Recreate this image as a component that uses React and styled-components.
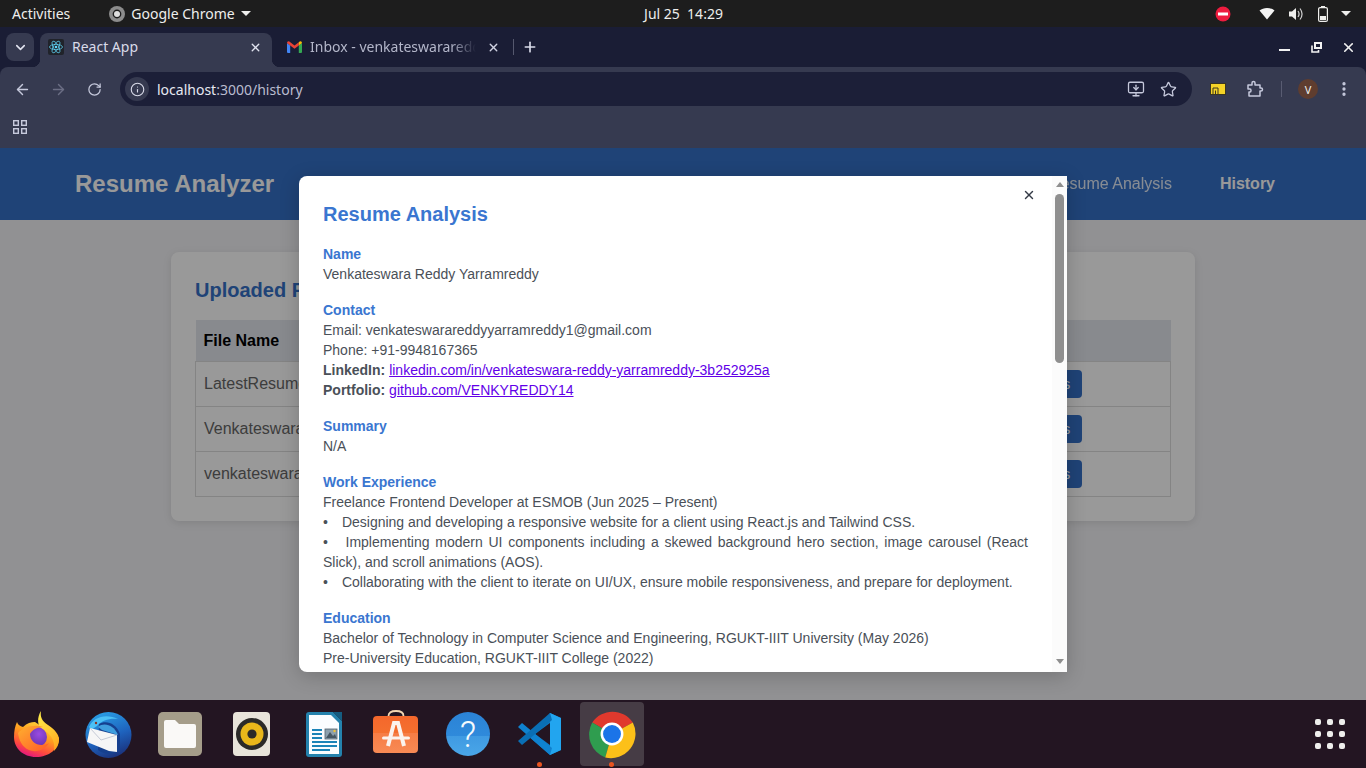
import React from 'react'
import styled, { createGlobalStyle } from 'styled-components'
import { ArrowLeft, ArrowRight, RotateCw, Info, Star, X, Plus, ChevronDown, MonitorDown, EllipsisVertical } from 'lucide-react'

const GlobalStyle = createGlobalStyle`
  html, body { margin: 0; padding: 0; background: #1d1d1d; }
  * { box-sizing: border-box; }
`

const Screen = styled.div`
  width: 1366px;
  height: 768px;
  overflow: hidden;
  display: flex;
  flex-direction: column;
  font-family: "Noto Sans", sans-serif;
`

/* ubuntu top bar */
const TopBar = styled.div`
  height: 27px;
  flex: none;
  background: #1d1d1d;
  color: #eeeeec;
  font-size: 14px;
  display: grid;
  grid-template-columns: 1fr auto 1fr;
  align-items: center;
  padding: 0 15px 0 12px;
`
const TopLeft = styled.div`
  display: flex;
  align-items: center;
`
const AppMenu = styled.div`
  display: flex;
  align-items: center;
  gap: 6px;
  margin-left: 39px;
`
const Clock = styled.div`
  white-space: pre;
  margin-left: 4px;
`
const TopRight = styled.div`
  display: flex;
  align-items: center;
  justify-content: flex-end;
  svg { flex: none; }
`
const Caret = styled.span`
  width: 0;
  height: 0;
  border-left: 5px solid transparent;
  border-right: 5px solid transparent;
  border-top: 5px solid #eeeeec;
`

/* chrome frame */
const Frame = styled.div`
  flex: none;
  background: #1a1d35;
`
const TabStrip = styled.div`
  height: 40px;
  display: flex;
  align-items: flex-end;
  padding-left: 6px;
  color: #d9dbe9;
  font-size: 14px;
`
const TabSearch = styled.div`
  width: 28px;
  height: 28px;
  border-radius: 8px;
  background: #363a50;
  display: flex;
  align-items: center;
  justify-content: center;
  margin-bottom: 6px;
  margin-right: 6px;
`
const ActiveTab = styled.div`
  position: relative;
  width: 232px;
  height: 34px;
  background: #363a50;
  border-radius: 8px 8px 0 0;
  display: flex;
  align-items: center;
  padding: 0 10px 6px 8px;
  gap: 8px;
  &::before, &::after {
    content: '';
    position: absolute;
    bottom: 0;
    width: 8px;
    height: 8px;
  }
  &::before { left: -8px; background: radial-gradient(circle at 0 0, transparent 8px, #363a50 8.5px); }
  &::after { right: -8px; background: radial-gradient(circle at 100% 0, transparent 8px, #363a50 8.5px); }
`
const InactiveTab = styled.div`
  width: 232px;
  height: 34px;
  margin-left: 1px;
  display: flex;
  align-items: center;
  padding: 0 5px 6px 14px;
  gap: 8px;
  color: #b3b6c9;
`
const TabTitle = styled.span`
  flex: 1;
  min-width: 0;
  line-height: 18px;
  white-space: nowrap;
  overflow: hidden;
  margin-right: ${p => p.$fade ? 3 : 0}px;
  mask-image: ${p => p.$fade ? 'linear-gradient(to right, #000 85%, transparent)' : 'none'};
`
const TabDivider = styled.div`
  width: 1px;
  height: 16px;
  background: #55586e;
  margin: 0 8px 12px 8px;
`
const NewTab = styled.div`
  margin-bottom: 12px;
  display: flex;
`
const WindowControls = styled.div`
  margin-left: auto;
  height: 40px;
  display: flex;
  align-items: center;
  padding-right: 2px;
`
const WinButton = styled.div`
  width: 32px;
  height: 24px;
  display: flex;
  align-items: center;
  justify-content: center;
`
const Toolbar = styled.div`
  height: 44px;
  background: #363a50;
  border-radius: 8px 8px 0 0;
  display: flex;
  align-items: center;
  padding: 0 0 0 4px;
`
const NavButton = styled.div`
  flex: none;
  width: 36px;
  height: 36px;
  display: flex;
  align-items: center;
  justify-content: center;
`
const Omnibox = styled.div`
  flex: none;
  width: 1072px;
  height: 34px;
  margin-left: 8px;
  border-radius: 17px;
  background: #1c1f38;
  display: flex;
  align-items: center;
  padding: 0 15px 0 5px;
`
const InfoChip = styled.div`
  width: 24px;
  height: 24px;
  border-radius: 50%;
  background: #363a50;
  display: flex;
  align-items: center;
  justify-content: center;
  margin-right: 8px;
`
const Url = styled.div`
  flex: 1;
  font-size: 14px;
  color: #b9bccf;
  span { color: #e6e8f2; }
`
const OmniIcons = styled.div`
  display: flex;
  align-items: center;
  gap: 15px;
`
const ToolbarRight = styled.div`
  display: flex;
  align-items: center;
  margin-left: 18px;
  flex: none;
`
const Separator = styled.div`
  width: 1px;
  height: 16px;
  background: #595c72;
  margin: 0 16px 0 17px;
`
const Avatar = styled.div`
  width: 20px;
  height: 20px;
  border-radius: 50%;
  background: #5f3d2f;
  color: #eee;
  font-size: 11px;
  display: flex;
  align-items: center;
  justify-content: center;
`
const BookmarkBar = styled.div`
  height: 37px;
  background: #363a50;
  padding: 8px 0 0 12px;
  display: flex;
  align-items: flex-start;
`

/* the page */
const Page = styled.div`
  position: relative;
  height: 552px;
  flex: none;
  background: #f2f2f5;
  font-family: "Liberation Sans", Arial, sans-serif;
`
const Header = styled.header`
  height: 72px;
  background: #3570c6;
  display: flex;
  align-items: center;
  justify-content: space-between;
  padding: 0 91px 0 75px;
  color: #fff;
`
const Brand = styled.div`
  font-size: 24px;
  font-weight: 700;
`
const Nav = styled.nav`
  display: flex;
  gap: 48px;
  font-size: 16px;
`
const NavLink = styled.span`
  font-weight: ${p => p.$active ? 700 : 400};
  opacity: ${p => p.$active ? 1 : 0.85};
`
const Card = styled.section`
  width: 1024px;
  margin: 32px auto 0;
  padding: 24px;
  background: #fff;
  border-radius: 8px;
  box-shadow: 0 2px 8px rgba(0, 0, 0, 0.1);
`
const CardTitle = styled.h2`
  margin: 0 0 16px;
  font-size: 20px;
  line-height: 28px;
  color: #3570c6;
`
const Table = styled.table`
  width: 975px;
  border-collapse: collapse;
  table-layout: fixed;
  font-size: 16px;
  color: #666;
`
const Th = styled.th`
  text-align: left;
  padding: 12px 8px 11px;
  height: 41px;
  background: #e3e6ed;
  color: #000;
  line-height: 18px;
`
const Td = styled.td`
  border: 1px solid #dddddd;
  padding: 8px;
  height: 45px;
  white-space: nowrap;
  overflow: hidden;
`
const ViewButton = styled.button`
  height: 28px;
  padding: 0 12px;
  border: none;
  border-radius: 4px;
  background: #3570c6;
  color: #fff;
  font: 14px "Liberation Sans", Arial, sans-serif;
`

/* modal */
const Overlay = styled.div`
  position: absolute;
  inset: 0;
  background: rgba(0, 0, 0, 0.4);
  display: flex;
  align-items: center;
  justify-content: center;
`
const Modal = styled.div`
  position: relative;
  width: 768px;
  height: 496px;
  background: #fff;
  border-radius: 8px 0 0 8px;
  box-shadow: 0 4px 20px rgba(0, 0, 0, 0.2);
  overflow: hidden;
  display: flex;
  font-size: 14px;
  line-height: 20px;
  color: #4a5058;
`
const ModalBody = styled.div`
  flex: 1;
  min-width: 0;
  padding: 24px;
`
const ScrollRail = styled.div`
  flex: none;
  width: 15px;
  background: #fbfbfb;
  display: flex;
  flex-direction: column;
`
const ScrollArrow = styled.div`
  flex: none;
  height: 18px;
  display: flex;
  justify-content: center;
  padding-top: ${p => p.$down ? 5 : 6}px;
  &::before {
    content: '';
    height: 0;
    border-left: 4.5px solid transparent;
    border-right: 4.5px solid transparent;
    border-${p => p.$down ? 'top' : 'bottom'}: 5px solid #8f8f8f;
  }
`
const ScrollTrack = styled.div`
  flex: 1;
  display: flex;
  justify-content: center;
`
const ScrollThumb = styled.div`
  width: 9px;
  height: 169px;
  border-radius: 5px;
  background: #8f8f8f;
`
const CloseButton = styled.div`
  position: absolute;
  top: 12px;
  right: 31px;
  display: flex;
  color: #343a46;
`
const ModalTitle = styled.h2`
  margin: 0 0 16px;
  font-size: 20px;
  line-height: 28px;
  color: #3a76d0;
`
const Section = styled.div`
  margin-bottom: 16px;
`
const SectionHead = styled.div`
  font-weight: 700;
  color: #3a76d0;
`
const Line = styled.div`
  text-align: ${p => p.$justify ? 'justify' : 'left'};
`
const Bullet = styled.span`
  margin-right: 6.2px;
`
const Anchor = styled.a`
  color: #6200e8;
  text-decoration: underline;
`

/* dock */
const Dock = styled.div`
  height: 68px;
  flex: none;
  background: #231522;
  display: flex;
  align-items: center;
`
const DockItem = styled.div`
  position: relative;
  width: 72px;
  height: 68px;
  display: flex;
  align-items: center;
  justify-content: center;
  &::before {
    content: '';
    display: ${p => p.$focused ? 'block' : 'none'};
    position: absolute;
    left: 4px;
    top: 2px;
    width: 64px;
    height: 64px;
    border-radius: 4px;
    background: #463c45;
  }
  &::after {
    content: '';
    display: ${p => p.$running ? 'block' : 'none'};
    position: absolute;
    left: 33px;
    bottom: 1px;
    width: 5px;
    height: 5px;
    border-radius: 50%;
    background: #e95420;
  }
  svg { position: relative; }
`
const ShowApps = styled.div`
  margin-left: auto;
  margin-right: 21px;
  width: 30px;
  display: grid;
  grid-template-columns: repeat(3, 6px);
  grid-auto-rows: 6px;
  gap: 6px;
`
const AppDot = styled.span`
  border-radius: 2px;
  background: #eeeeec;
`

/* icons */
const TrayIcons = () => (
  <>
    <svg width="16" height="16" viewBox="0 0 16 16" style={{ marginRight: 28 }}>
      <circle cx="8" cy="8" r="7.5" fill="#ed1c3f" />
      <rect x="3" y="6.5" width="10" height="3" fill="#fff" />
    </svg>
    <svg width="16" height="13" viewBox="0 0 16 13" style={{ marginRight: 13 }}>
      <path d="M0.5 3.5 C4.5 0 11.5 0 15.5 3.5 L8 12.5 Z" fill="#f4f4f4" />
    </svg>
    <svg width="16" height="16" viewBox="0 0 16 16" style={{ marginRight: 14 }} fill="none">
      <path d="M1 5.5 H4 L8 2 V14 L4 10.5 H1 Z" fill="#eeeeec" />
      <path d="M10 5 C11.3 6.8 11.3 9.2 10 11 M12 2.5 C14.6 6 14.6 10 12 13.5" stroke="#d0d0d0" strokeWidth="1.2" />
    </svg>
    <svg width="10" height="16" viewBox="0 0 10 16" style={{ marginRight: 13 }} fill="none">
      <rect x="3" y="0" width="4" height="2" fill="#eeeeec" />
      <rect x="0.6" y="1.6" width="8.8" height="13.8" rx="1.5" stroke="#eeeeec" strokeWidth="1.2" />
      <rect x="2" y="10" width="6" height="4" fill="#eeeeec" />
    </svg>
  </>
)

const ChromeMono = () => (
  <svg width="16" height="16" viewBox="0 0 16 16">
    <circle cx="8" cy="8" r="8" fill="#8c8c8c" />
    <circle cx="8" cy="8" r="4.4" fill="#1d1d1d" />
    <circle cx="8" cy="8" r="3" fill="#dedede" />
  </svg>
)

const ReactFavicon = () => (
  <svg width="16" height="16" viewBox="0 0 16 16" fill="none" stroke="#61dafb" strokeWidth="0.7" style={{ flex: 'none' }}>
    <rect width="16" height="16" rx="2" fill="#20232a" stroke="none" />
    <ellipse cx="8" cy="8" rx="6.5" ry="2.6" />
    <ellipse cx="8" cy="8" rx="6.5" ry="2.6" transform="rotate(60 8 8)" />
    <ellipse cx="8" cy="8" rx="6.5" ry="2.6" transform="rotate(120 8 8)" />
    <circle cx="8" cy="8" r="1.3" fill="#61dafb" stroke="none" />
  </svg>
)

const GmailIcon = () => (
  <svg width="15" height="12" viewBox="0 0 15 12" style={{ flex: 'none' }}>
    <path d="M0 2 V11 Q0 12 1 12 H3.2 V4.5 Z" fill="#4285f4" />
    <path d="M15 2 V11 Q15 12 14 12 H11.8 V4.5 Z" fill="#34a853" />
    <path d="M0 2 Q0 0 2 0.3 L7.5 4.6 L11.8 1.3 V4.5 L7.5 7.8 L3.2 4.5 L0 2 Z" fill="#ea4335" />
    <path d="M11.8 1.3 L13 0.3 Q15 0 15 2 L11.8 4.5 Z" fill="#fbbc04" />
  </svg>
)

const RestoreIcon = () => (
  <svg width="11" height="11" viewBox="0 0 11 11" fill="none" stroke="#f2f2f2">
    <rect x="4" y="1" width="6" height="5" strokeWidth="2" />
    <path d="M1 3.5 V10 H7.5 V8" strokeWidth="1.6" />
  </svg>
)

const PinnedExtension = () => (
  <svg width="16" height="12" viewBox="0 0 16 12" fill="none">
    <rect x="0.5" y="0.5" width="15" height="11" fill="#f5d327" stroke="#3a3620" />
    <path d="M3 11 V5 H8 V11 M5.5 11 V7.5" stroke="#3a3620" strokeWidth="1" />
  </svg>
)

const PuzzleIcon = () => (
  <svg width="18" height="18" viewBox="0 0 18 18" fill="none" stroke="#c6c9dc" strokeWidth="1.5" strokeLinejoin="round" style={{ marginLeft: 20 }}>
    <path d="M2 5 H6 V3 Q6 1.5 7.5 1.5 Q9 1.5 9 3 V5 H14 V8 H15 Q16.5 8 16.5 9.5 Q16.5 11 15 11 H14 V16 H3 V12 H4 Q5 12 5 10.5 Q5 9 4 9 H2 Z" />
  </svg>
)

const AppsGrid = () => (
  <svg width="16" height="16" viewBox="0 0 16 16" fill="none" stroke="#c6c9dc" strokeWidth="1.4">
    <rect x="1.7" y="1.7" width="4.6" height="4.6" />
    <rect x="9.7" y="1.7" width="4.6" height="4.6" />
    <rect x="1.7" y="9.7" width="4.6" height="4.6" />
    <rect x="9.7" y="9.7" width="4.6" height="4.6" />
  </svg>
)

const Firefox = () => (
  <svg width="48" height="48" viewBox="0 0 48 48">
    <defs>
      <linearGradient id="ffBody" x1="0.8" y1="0.1" x2="0.35" y2="1">
        <stop offset="0" stopColor="#ffd53a" />
        <stop offset="0.4" stopColor="#ff9a1f" />
        <stop offset="0.75" stopColor="#ff4a3e" />
        <stop offset="1" stopColor="#e3177f" />
      </linearGradient>
      <radialGradient id="ffGlobe" cx="0.6" cy="0.35" r="0.8">
        <stop offset="0" stopColor="#9a4be0" />
        <stop offset="1" stopColor="#5a2ea6" />
      </radialGradient>
      <linearGradient id="ffFox" x1="0" y1="0" x2="1" y2="1">
        <stop offset="0" stopColor="#ffb02e" />
        <stop offset="1" stopColor="#ff5a2a" />
      </linearGradient>
      <linearGradient id="ffFlame" x1="0.3" y1="0" x2="0.8" y2="1">
        <stop offset="0" stopColor="#ffe847" />
        <stop offset="1" stopColor="#ffa91f" />
      </linearGradient>
    </defs>
    <path d="M5 12 C6 15 8 16 11 17 C15 13 19 12 23 12 L26 14 C30 17 40 17 47 28 C47 39 37 47 24 47 C11 47 2 38 2 27 C2 21 3 16 5 12 Z" fill="url(#ffBody)" />
    <path d="M29 1 C28 7 30 11 36 15 C43 20 47 24 47 30 C47 34 45 38 42 41 C44 30 37 22 30 19 C25 16 25 7 29 1 Z" fill="url(#ffFlame)" />
    <circle cx="25" cy="27" r="10" fill="url(#ffGlobe)" />
    <path d="M6 23 C12 17 22 14 31 17 C25 17 20 20 18 24 C18 33 28 38 37 33 C33 40 24 43 17 40 C10 37 7 30 6 23 Z" fill="url(#ffFox)" />
  </svg>
)

const Thunderbird = () => (
  <svg width="48" height="48" viewBox="0 0 48 48">
    <defs>
      <linearGradient id="tbRing" x1="0.3" y1="0" x2="0.7" y2="1">
        <stop offset="0" stopColor="#2a9fe6" />
        <stop offset="0.55" stopColor="#1e62bd" />
        <stop offset="1" stopColor="#1a2f78" />
      </linearGradient>
    </defs>
    <circle cx="24.5" cy="25" r="23" fill="url(#tbRing)" />
    <path d="M5 17 C9 7 22 3 34 9 C26 8 18 10 13 16 L7 20 Z" fill="#4cc0f5" />
    <path d="M15 14 C22 10 32 13 36 24 L36 40 C30 45 20 45 14 40 Z" fill="#16408f" />
    <path d="M14 17 C20 12 30 15 34 25 L18 20 Z" fill="#3f9ede" />
    <path d="M6 18 L33 25 V42 L25 41 L3 32 Z" fill="#f6f6f6" />
    <path d="M6 18 L17 30 L33 25" fill="none" stroke="#c5cad6" strokeWidth="1" />
    <circle cx="12" cy="13" r="1.2" fill="#8a3326" />
  </svg>
)

const FilesIcon = () => (
  <svg width="48" height="48" viewBox="0 0 48 48">
    <rect x="2" y="2" width="44" height="44" rx="5" fill="#a59d8a" />
    <path d="M8 12 Q8 10 10 10 H19 L23 14 H38 Q40 14 40 16 V36 Q40 38 38 38 H10 Q8 38 8 36 Z" fill="#faf9f7" />
  </svg>
)

const Rhythmbox = () => (
  <svg width="48" height="48" viewBox="0 0 48 48">
    <rect x="5" y="2" width="37" height="44" rx="4" fill="#e8e4da" />
    <circle cx="24" cy="24" r="16" fill="#2b2a28" />
    <circle cx="24" cy="24" r="11.5" fill="#e9b71a" />
    <circle cx="24" cy="24" r="4.6" fill="#2b2a28" />
  </svg>
)

const WriterIcon = () => (
  <svg width="48" height="48" viewBox="0 0 48 48">
    <path d="M9 2 H33 L42 11 V44 Q42 47 39 47 H9 Q6 47 6 44 V5 Q6 2 9 2 Z" fill="#2482ad" />
    <path d="M9 5 H31 L39 13 V44 H9 Z" fill="#fafdff" />
    <path d="M33 2 H42 V11 Z" fill="#155c80" />
    <rect x="25" y="19" width="12" height="10" fill="#8ca0ad" stroke="#50626e" strokeWidth="0.8" />
    <path d="M26 28 L30 22 L33 26 L35 24 L36.5 28 Z" fill="#465763" />
    <circle cx="34.5" cy="21" r="1.2" fill="#f1c232" />
    <path d="M12 20 H22 M12 24 H22 M12 28 H22 M12 32 H37 M12 36 H37 M12 40 H30" stroke="#1b84b8" strokeWidth="2" />
  </svg>
)

const AppCenter = () => (
  <svg width="48" height="48" viewBox="0 0 48 48">
    <defs>
      <linearGradient id="acBag" x1="0" y1="0" x2="0" y2="1">
        <stop offset="0" stopColor="#f4672c" />
        <stop offset="0.47" stopColor="#f4702f" />
        <stop offset="0.47" stopColor="#f67d45" />
        <stop offset="1" stopColor="#f88a55" />
      </linearGradient>
    </defs>
    <path d="M16.5 8 V6 Q16.5 1 24 1 Q31.5 1 31.5 6 V8" fill="none" stroke="#f3d7b3" strokeWidth="1.8" />
    <rect x="1" y="6" width="45" height="37" rx="4" fill="url(#acBag)" />
    <path d="M16 36 L22 13 H26 L32 36" fill="none" stroke="#fbf3ee" strokeWidth="4" />
    <rect x="10" y="26.5" width="28" height="3" rx="1.5" fill="#fbf3ee" />
  </svg>
)

const HelpIcon = () => (
  <svg width="48" height="48" viewBox="0 0 48 48">
    <defs>
      <linearGradient id="helpBg" x1="0" y1="0" x2="0" y2="1">
        <stop offset="0" stopColor="#2b83d6" />
        <stop offset="0.55" stopColor="#2f8adb" />
        <stop offset="0.55" stopColor="#3f9ae2" />
        <stop offset="1" stopColor="#4aa6e8" />
      </linearGradient>
    </defs>
    <circle cx="24" cy="24" r="22" fill="url(#helpBg)" />
    <text x="24" y="37" textAnchor="middle" fontFamily="Roboto, sans-serif" fontWeight="300" fontSize="36" fill="#f5fafd">?</text>
  </svg>
)

const VSCode = () => (
  <svg width="48" height="48" viewBox="0 0 48 48">
    <path d="M34 3 L45 8 V40 L34 45 L12 26 L26 14 Z" fill="#0e7ac4" />
    <path d="M34 3 L45 8 V40 L34 45 Z" fill="#22a5ef" />
    <path d="M34 13 L34 35 L19 24 Z" fill="#231522" />
    <path d="M2 17 L6 13 L36 38 L34 45 Z" fill="#0f82cf" />
    <path d="M2 31 L6 35 L36 10 L34 3 Z" fill="#0a6fb5" />
  </svg>
)

const ChromeColor = () => (
  <svg width="50" height="50" viewBox="0 0 48 48">
    <path d="M24 24 L5 13 A23.5 23.5 0 0 1 44 13 Z" fill="#e0392d" />
    <path d="M24 24 L5 13 A23.5 23.5 0 0 0 17.5 46.5 Z" fill="#2f9d4f" />
    <path d="M24 24 L44 13 A23.5 23.5 0 0 1 17.5 46.5 Z" fill="#fcc019" />
    <circle cx="24" cy="24" r="11" fill="#fff" />
    <circle cx="24" cy="24" r="8.6" fill="#1b74e8" />
  </svg>
)

const dockApps = [
  { id: 'firefox', Icon: Firefox },
  { id: 'thunderbird', Icon: Thunderbird },
  { id: 'files', Icon: FilesIcon },
  { id: 'rhythmbox', Icon: Rhythmbox },
  { id: 'writer', Icon: WriterIcon },
  { id: 'appcenter', Icon: AppCenter },
  { id: 'help', Icon: HelpIcon },
  { id: 'vscode', Icon: VSCode, running: true },
  { id: 'chrome', Icon: ChromeColor, running: true, focused: true },
]

const resumes = ['LatestResume.pdf', 'Venkateswara_Resume.pdf', 'venkateswara_cv.pdf']

const App = () => {
  return (
    <Screen>
      <GlobalStyle />
      <TopBar>
        <TopLeft>
          <span>Activities</span>
          <AppMenu>
            <ChromeMono />
            <span>Google Chrome</span>
            <Caret />
          </AppMenu>
        </TopLeft>
        <Clock>Jul 25  14:29</Clock>
        <TopRight>
          <TrayIcons />
          <Caret />
        </TopRight>
      </TopBar>

      <Frame>
        <TabStrip>
          <TabSearch><ChevronDown size={15} strokeWidth={2.5} color="#e2e4f0" /></TabSearch>
          <ActiveTab>
            <ReactFavicon />
            <TabTitle>React App</TabTitle>
            <X size={13} strokeWidth={2.5} color="#e2e4f0" />
          </ActiveTab>
          <InactiveTab>
            <GmailIcon />
            <TabTitle $fade>Inbox - venkateswarareddyyarramreddy1</TabTitle>
            <X size={13} strokeWidth={2.5} color="#d0d2e2" style={{ flex: 'none' }} />
          </InactiveTab>
          <TabDivider />
          <NewTab><Plus size={16} strokeWidth={2.5} color="#d9dbe9" /></NewTab>
          <WindowControls>
            <WinButton>
              <svg width="11" height="12" viewBox="0 0 11 12"><rect y="8" width="11" height="2" fill="#f2f2f2" /></svg>
            </WinButton>
            <WinButton><RestoreIcon /></WinButton>
            <WinButton><X size={15} strokeWidth={2.5} color="#f2f2f2" /></WinButton>
          </WindowControls>
        </TabStrip>
        <Toolbar>
          <NavButton><ArrowLeft size={17} strokeWidth={2} color="#c6c9dc" /></NavButton>
          <NavButton><ArrowRight size={17} strokeWidth={2} color="#6b6e84" /></NavButton>
          <NavButton><RotateCw size={15} strokeWidth={2} color="#c6c9dc" /></NavButton>
          <Omnibox>
            <InfoChip><Info size={15} strokeWidth={1.8} color="#d9dbe9" /></InfoChip>
            <Url><span>localhost</span>:3000/history</Url>
            <OmniIcons>
              <MonitorDown size={18} strokeWidth={1.7} color="#c6c9dc" />
              <Star size={17} strokeWidth={1.8} color="#c6c9dc" />
            </OmniIcons>
          </Omnibox>
          <ToolbarRight>
            <PinnedExtension />
            <PuzzleIcon />
            <Separator />
            <Avatar>V</Avatar>
            <EllipsisVertical size={18} strokeWidth={2.4} color="#c6c9dc" style={{ marginLeft: 17 }} />
          </ToolbarRight>
        </Toolbar>
        <BookmarkBar><AppsGrid /></BookmarkBar>
      </Frame>

      <Page>
        <Header>
          <Brand>Resume Analyzer</Brand>
          <Nav>
            <NavLink>Resume Analysis</NavLink>
            <NavLink $active>History</NavLink>
          </Nav>
        </Header>
        <Card>
          <CardTitle>Uploaded Resumes</CardTitle>
          <Table>
            <colgroup>
              <col style={{ width: 769 }} />
              <col style={{ width: 206 }} />
            </colgroup>
            <thead>
              <tr>
                <Th>File Name</Th>
                <Th />
              </tr>
            </thead>
            <tbody>
              {resumes.map(name => (
                <tr key={name}>
                  <Td>{name}</Td>
                  <Td><ViewButton>View Analysis</ViewButton></Td>
                </tr>
              ))}
            </tbody>
          </Table>
        </Card>

        <Overlay>
          <Modal>
            <ModalBody>
              <ModalTitle>Resume Analysis</ModalTitle>
              <Section>
                <SectionHead>Name</SectionHead>
                <Line>Venkateswara Reddy Yarramreddy</Line>
              </Section>
              <Section>
                <SectionHead>Contact</SectionHead>
                <Line>Email: venkateswarareddyyarramreddy1@gmail.com</Line>
                <Line>Phone: +91-9948167365</Line>
                <Line><strong>LinkedIn:</strong> <Anchor href="#">linkedin.com/in/venkateswara-reddy-yarramreddy-3b252925a</Anchor></Line>
                <Line><strong>Portfolio:</strong> <Anchor href="#">github.com/VENKYREDDY14</Anchor></Line>
              </Section>
              <Section>
                <SectionHead>Summary</SectionHead>
                <Line>N/A</Line>
              </Section>
              <Section>
                <SectionHead>Work Experience</SectionHead>
                <Line>Freelance Frontend Developer at ESMOB (Jun 2025 – Present)</Line>
                <Line $justify><Bullet>•</Bullet>{'\u00a0\u00a0'}Designing and developing a responsive website for a client using React.js and Tailwind CSS.</Line>
                <Line $justify><Bullet>•</Bullet>{'\u00a0\u00a0'}Implementing modern UI components including a skewed background hero section, image carousel (React Slick), and scroll animations (AOS).</Line>
                <Line $justify><Bullet>•</Bullet>{'\u00a0\u00a0'}Collaborating with the client to iterate on UI/UX, ensure mobile responsiveness, and prepare for deployment.</Line>
              </Section>
              <Section>
                <SectionHead>Education</SectionHead>
                <Line>Bachelor of Technology in Computer Science and Engineering, RGUKT-IIIT University (May 2026)</Line>
                <Line>Pre-University Education, RGUKT-IIIT College (2022)</Line>
              </Section>
            </ModalBody>
            <ScrollRail>
              <ScrollArrow />
              <ScrollTrack><ScrollThumb /></ScrollTrack>
              <ScrollArrow $down />
            </ScrollRail>
            <CloseButton><X size={14} strokeWidth={2.4} /></CloseButton>
          </Modal>
        </Overlay>
      </Page>

      <Dock>
        {dockApps.map(({ id, Icon, running, focused }) => (
          <DockItem key={id} $running={running} $focused={focused}><Icon /></DockItem>
        ))}
        <ShowApps>
          {Array.from({ length: 9 }, (_, i) => <AppDot key={i} />)}
        </ShowApps>
      </Dock>
    </Screen>
  )
}

export default App
